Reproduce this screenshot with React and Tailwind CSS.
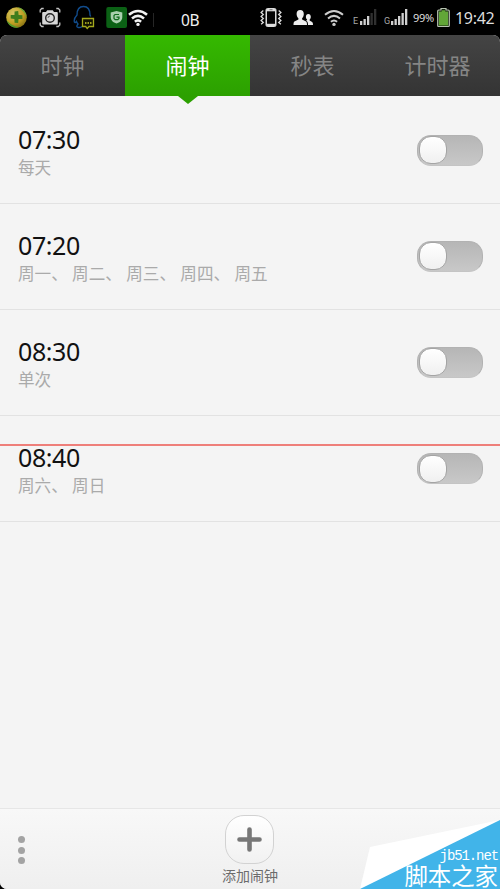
import { useState } from "react";

const tabs = ["时钟", "闹钟", "秒表", "计时器"];

const initialAlarms = [
  { id: 1, time: "07:30", repeat: "每天", enabled: false },
  { id: 2, time: "07:20", repeat: "周一、 周二、 周三、 周四、 周五", enabled: false },
  { id: 3, time: "08:30", repeat: "单次", enabled: false },
  { id: 4, time: "08:40", repeat: "周六、 周日", enabled: false },
];

function ShieldBallIcon() {
  return (
    <svg className="ml-1.5 w-[21px] h-[35px] shrink-0" viewBox="0 0 21 35">
      <defs>
        <radialGradient id="ball" cx="0.35" cy="0.3" r="0.8">
          <stop offset="0" stopColor="#d6c765" />
          <stop offset="0.6" stopColor="#c09f22" />
          <stop offset="1" stopColor="#7d6a12" />
        </radialGradient>
      </defs>
      <circle cx="10.5" cy="17.5" r="10.3" fill="url(#ball)" />
      <path d="M0.600 20a10.300 10.300 0 0 0 13 7.300c-5-.8-10-3-13-7.300z" fill="#4f9a2c" />
      <path d="M11 7.200a10.300 10.300 0 0 1 9.800 10c-2-4.500-5-8-9.800-10z" fill="#69a93a" />
      <path d="M8.600 11.500l3.600-.4.400 4 3.800.2v3.600l-3.900.2-.3 4-3.600-.3-.2-3.800-3.700-.4v-3.500l3.800-.1z" fill="#3f7d1c" />
    </svg>
  );
}

function CameraIcon() {
  return (
    <svg className="ml-3 w-[22px] h-[35px] shrink-0" viewBox="0 0 22 35" fill="none">
      <path d="M1.200 12.500v-2.500l1.500-1.500h2M17.300 8.500h2l1.500 1.500v2.500M1.200 22.500v2.500l1.500 1.500h2M17.300 26.500h2l1.500-1.500v-2.500" stroke="#c4c4c4" strokeWidth="1.300" />
      <path d="M4.200 12h2.800l1.200-1.700h5.600l1.200 1.700h2.800q1 0 1 1v10.500q0 1-1 1h-13.600q-1 0-1-1v-10.500q0-1 1-1z" fill="#d6d6d6" />
      <circle cx="11" cy="18" r="4.300" fill="#d6d6d6" stroke="#222" strokeWidth="1.400" />
      <path d="M11 16a2 2 0 0 0-2 2" stroke="#555" strokeWidth="0.900" />
    </svg>
  );
}

function PenguinIcon() {
  return (
    <svg className="ml-3 w-[22px] h-[35px] shrink-0" viewBox="0 0 22 35" fill="none">
      <path d="M9 26.500c-2 1.700-6 1.200-5-1l1-1.500c-.8-.8-1.200-1.700-1.500-2.500-1 1.500-2.300 1.500-2.300-.5 0-2 1-4.200 2.800-6 0-5.500 2.500-8.500 6.500-8.500s6.500 3 6.500 8.500l.7 1.500" stroke="#114c8c" strokeWidth="1.400" />
      <path d="M9.500 18.500h11v8h-4.500l-1.800 2-1.500-2h-3.200z" fill="#101000" stroke="#a3a81c" strokeWidth="1.300" />
      <path d="M12 23h1.500M14.500 23h1.500M17 23h1.500" stroke="#c8cc28" strokeWidth="1.500" />
    </svg>
  );
}

function GuardIcon() {
  return (
    <svg className="ml-[11px] w-[21px] h-[35px] shrink-0" viewBox="0 0 21 35" fill="none">
      <rect x="0.300" y="7" width="20.700" height="21" rx="2" fill="#0b6115" />
      <path d="M10.500 11l5.800 1.500v4.500c0 3.500-2.500 5.500-5.800 6.500-3.300-1-5.800-3-5.800-6.500v-4.500z" fill="#a9cfae" />
      <path d="M13 14.500h-4l-1 1v3l1.200 1.200h2.600l1.200-1.200v-1.300h-2.500" stroke="#0f6a1c" strokeWidth="1.200" />
    </svg>
  );
}

function WifiIcon({ className, color, width }) {
  return (
    <svg className={className} viewBox="0 0 20 35" fill="none" stroke={color} strokeWidth={width}>
      <path d="M1 14.800q9-7.600 18 0" />
      <path d="M4 18.400q6-5 12 0" />
      <path d="M6.900 21.700q3.100-2.500 6.200 0" />
      <circle cx="10" cy="24.400" r="1.700" fill={color} stroke="none" />
    </svg>
  );
}

function VibrateIcon() {
  return (
    <svg className="w-[22px] h-[35px] shrink-0" viewBox="0 0 22 35" fill="none" stroke="#dcdcdc">
      <path d="M3.300 10.500l-2.200 1.900 2.200 2-2.200 2 2.200 2-2.200 2 2.200 2-2.200 1.900M18.700 10.500l2.200 1.900-2.200 2 2.200 2-2.200 2 2.200 2-2.200 2 2.200 1.900" strokeWidth="1.300" />
      <path d="M7.500 8.500h7q1.500 0 1.500 1.500v15q0 1.500-1.500 1.500h-7q-1.500 0-1.500-1.500v-15q0-1.500 1.500-1.500z" fill="#dcdcdc" strokeWidth="1" />
      <rect x="7" y="11.300" width="8" height="12.500" fill="#050505" stroke="none" />
      <path d="M9.500 9.700h3" stroke="#555" strokeWidth="0.800" />
    </svg>
  );
}

function PeopleIcon() {
  return (
    <svg className="ml-[11px] w-5 h-[35px] shrink-0" viewBox="0 0 20 35" fill="#ececec">
      <path d="M7.200 10c2.300 0 3.600 1.600 3.600 4 0 1.900-.8 3.200-1.700 4.200v1.300l4 2c.7.500.9 1.500.9 3.500h-13.500c0-2 .2-3 .9-3.500l4-2v-1.300c-1-1-1.800-2.300-1.800-4.200 0-2.400 1.300-4 3.600-4z" />
      <path d="M15.300 14c1.600 0 2.500 1.100 2.500 2.800 0 1.300-.5 2.200-1.200 2.900v.9l2.500 1.300c.6.400.9 1.300.9 3.100h-5c0-1.600-.2-2.800-1-3.700l-.8-.7 1-.9c-.8-.7-1.300-1.600-1.300-2.900 0-1.700.9-2.800 2.400-2.800z" />
    </svg>
  );
}

function SignalIcon({ label, bars, className }) {
  return (
    <div className={`flex items-end h-[25px] shrink-0 ${className}`}>
      <span className="w-[7px] text-[9px] leading-[8px] text-[#a8a8a8] font-['Roboto',sans-serif]">{label}</span>
      <svg className="w-[17px] h-4" viewBox="0 0 17 16">
        {[4, 6, 9, 12, 16].map((h, i) => (
          <rect key={h} x={i * 3.5} y={16 - h} width="2.300" height={h} fill={i < bars ? "#d0d0d0" : "#303030"} />
        ))}
      </svg>
    </div>
  );
}

function BatteryIcon() {
  return (
    <svg className="ml-[2px] w-[13px] h-[35px] shrink-0" viewBox="0 0 13 35">
      <path d="M4 10v-1.500h5v1.500h2.300q1 0 1 1v14.500q0 1-1 1h-9.600q-1 0-1-1v-14.500q0-1 1-1z" fill="#10200a" stroke="#b9c4b2" strokeWidth="1.200" />
      <path d="M4.800 10.300h3.400v1.200h2.800v14h-9v-14h2.800z" fill="#62a637" />
    </svg>
  );
}

function StatusBar() {
  return (
    <div className="flex h-[35px] items-start bg-black text-[#dedede]">
      <ShieldBallIcon />
      <CameraIcon />
      <PenguinIcon />
      <GuardIcon />
      <WifiIcon className="ml-px w-5 h-[35px] shrink-0" color="#f2f2f2" width="2.600" />
      <div className="ml-[5px] mt-[13px] w-px h-[14px] bg-[#262626]" />
      <span className="ml-[27px] w-[79px] text-[15.500px] leading-[40px] tracking-[-0.300px] text-[#f0f0f0]">0B</span>
      <VibrateIcon />
      <PeopleIcon />
      <WifiIcon className="ml-[11px] w-5 h-[35px] shrink-0" color="#cccccc" width="2" />
      <SignalIcon label="E" bars={3} className="ml-[9px]" />
      <SignalIcon label="G" bars={5} className="ml-[7px]" />
      <span className="ml-[5px] w-[22px] whitespace-nowrap text-[11px] leading-[35px] tracking-[-0.300px]">99%</span>
      <BatteryIcon />
      <span className="ml-[5px] text-[16px] leading-[36px] tracking-[-0.300px]">19:42</span>
    </div>
  );
}

function Toggle({ on, onChange }) {
  return (
    <button
      role="switch"
      aria-checked={on}
      onClick={onChange}
      className={`flex h-[31px] w-[66px] items-center rounded-[14px] border border-[#b2b2b2] border-b-[#c4c4c4] p-px bg-gradient-to-b cursor-pointer ${
        on ? "justify-end from-[#2ca000] to-[#37b800]" : "from-[#b6b6b6] to-[#c8c8c8]"
      }`}
    >
      <span className="h-[28px] w-[28px] rounded-[12px] border border-[#a4a4a4] bg-gradient-to-b from-white to-[#f0f0f0]" />
    </button>
  );
}

function AlarmRow({ alarm, onToggle }) {
  return (
    <div className="flex h-[106.200px] items-start justify-between border-b border-[#e2e2e2] pl-[18px] pr-[17px]">
      <div className="pt-[25px]">
        <div className="text-[25px] leading-[32px] tracking-[-0.400px] text-[#111]">{alarm.time}</div>
        <div className="mt-px text-[16.600px] leading-[24px] text-[#aaa]">{alarm.repeat}</div>
      </div>
      <div className="pt-[37px]">
        <Toggle on={alarm.enabled} onChange={onToggle} />
      </div>
    </div>
  );
}

function Watermark() {
  return (
    <div className="absolute bottom-0 right-0 h-[71px] w-[142px]">
      <svg className="absolute inset-0 h-full w-full" viewBox="0 0 142 71">
        <path d="M12 29L142 2v69H2z" fill="#fff" />
        <path d="M142 2v69H2z" fill="#41b4e9" />
      </svg>
      <div className="relative flex flex-col items-end pt-[30px] pr-[2px] text-white">
        <span className="font-['Liberation_Mono',monospace] text-[14px] leading-[16px] tracking-[-1.100px]">jb51.net</span>
        <span className="whitespace-nowrap text-[23.400px] leading-[24px]">脚本之家</span>
      </div>
    </div>
  );
}

export default function App() {
  const [activeTab, setActiveTab] = useState(1);
  const [alarms, setAlarms] = useState(initialAlarms);

  const toggleAlarm = (id) => {
    setAlarms(alarms.map((a) => (a.id === id ? { ...a, enabled: !a.enabled } : a)));
  };

  return (
    <div className="relative flex h-[889px] w-[500px] flex-col overflow-hidden bg-black font-['Noto_Sans','Noto_Sans_CJK_SC',sans-serif]">
      <StatusBar />

      <div className="flex min-h-0 flex-1 flex-col overflow-hidden rounded-t-[7px] rounded-bl-[7px] bg-[#f4f4f4]">
        {/* Tabs */}
        <div className="grid h-[61px] shrink-0 grid-cols-4 bg-gradient-to-b from-[#444] to-[#343434]">
          {tabs.map((tab, i) => (
            <button
              key={tab}
              onClick={() => setActiveTab(i)}
              className={`relative flex items-center justify-center pb-px text-[22px] cursor-pointer ${
                i === activeTab ? "bg-gradient-to-b from-[#35b900] to-[#2ca000] text-white" : "text-[#858585]"
              }`}
            >
              {tab}
              {i === activeTab && (
                <svg className="absolute left-1/2 top-full h-2 w-5 -translate-x-1/2" viewBox="0 0 20 8">
                  <path d="M0 0h20l-10 8z" fill="#2ca000" />
                </svg>
              )}
            </button>
          ))}
        </div>

        {/* Alarm list */}
        <div className="flex-1 pt-[1.500px]">
          {alarms.map((alarm) => (
            <AlarmRow key={alarm.id} alarm={alarm} onToggle={() => toggleAlarm(alarm.id)} />
          ))}
        </div>

        {/* Bottom bar */}
        <div className="grid h-[81px] shrink-0 grid-cols-3 border-t border-[#e6e6e6] bg-gradient-to-b from-[#f8f8f8] to-[#efefef]">
          <button className="flex flex-col items-start gap-[3.500px] pl-[18px] pt-[27px] cursor-pointer" aria-label="更多">
            <span className="h-[7px] w-[7px] rounded-full bg-[#a3a3a3]" />
            <span className="h-[7px] w-[7px] rounded-full bg-[#a3a3a3]" />
            <span className="h-[7px] w-[7px] rounded-full bg-[#a3a3a3]" />
          </button>
          <button className="flex flex-col items-center pt-[6px] cursor-pointer">
            <span className="flex h-[49px] w-[49px] items-center justify-center rounded-[19px] border border-[#d2d2d2] bg-gradient-to-b from-white to-[#f1f1f1]">
              <svg className="h-[25px] w-[25px]" viewBox="0 0 25 25" stroke="#777" strokeWidth="4.600" strokeLinecap="round">
                <path d="M12.500 2.500v20M2.500 12.500h20" />
              </svg>
            </span>
            <span className="mt-[2px] text-[14px] leading-[20px] text-[#6c6c6c]">添加闹钟</span>
          </button>
        </div>
      </div>

      {/* Guide line over the list */}
      <div className="absolute left-0 top-[444px] h-[2px] w-full bg-[#ee7f7a]" />
      <Watermark />
    </div>
  );
}
